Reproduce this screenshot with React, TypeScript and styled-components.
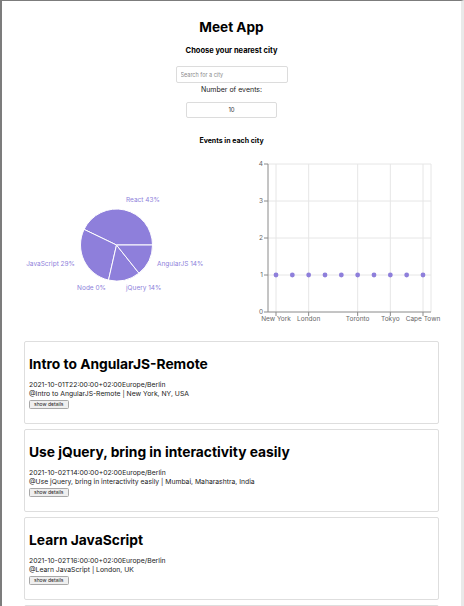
import * as React from "react";
import styled, {createGlobalStyle} from "styled-components";

const GlobalStyle = createGlobalStyle`
	html, body {
		margin: 0;
		padding: 0;
		background: #fff;
	}
	body {
		font-family: Inter, "Noto Sans", "Liberation Sans", sans-serif;
		color: #000;
	}
	* {
		box-sizing: border-box;
	}
`;

const PURPLE = "#8e7fdb";
const AXIS = "#8a8a8a";
const GRID = "#e6e6e6";

const Frame = styled.div`
	width: 464px;
	min-height: 606px;
	border-top: 1px solid #7c7c7c;
	border-left: 2px solid #7c7c7c;
	border-right: 3px solid #e9e9e9;
	display: flex;
	flex-direction: column;
	align-items: center;
`;

const Title = styled.h1`
	margin: 18px 0 0;
	font-size: 13.6px;
	font-weight: 700;
	line-height: 17px;
`;

const Subtitle = styled.h4`
	margin: 10px 0 0;
	font-size: 7.5px;
	font-weight: 700;
	line-height: 9px;
`;

const SearchInput = styled.input`
	margin-top: 11px;
	width: 112px;
	height: 17px;
	padding: 0 0 0 4px;
	border: 1px solid #dcdcdc;
	border-radius: 2px;
	font-family: inherit;
	font-size: 5.5px;
	outline: none;

	&::placeholder {
		color: #8a8a8a;
	}
`;

const Label = styled.label`
	margin-top: 3px;
	font-size: 7px;
	line-height: 8.5px;
	color: #222;
`;

const NumberInput = styled.input`
	margin-top: 7px;
	width: 91px;
	height: 16px;
	padding: 0;
	border: 1px solid #dcdcdc;
	border-radius: 2px;
	font-family: inherit;
	font-size: 6px;
	color: #333;
	text-align: center;
	outline: none;
`;

const SectionTitle = styled.h4`
	margin: 19px 0 0;
	font-size: 7px;
	font-weight: 700;
	line-height: 8.5px;
`;

const ChartsRow = styled.div`
	margin-top: 11px;
	width: 100%;
	display: grid;
	grid-template-columns: 1fr 1fr;
`;

const ChartBox = styled.div`
	display: flex;
	justify-content: center;
	height: 170px;
`;

const ChartText = styled.text<{$color?: string}>`
	font-family: Inter, "Noto Sans", sans-serif;
	font-size: 6.5px;
	fill: ${(p) => p.$color || "#666"};
`;

const EventList = styled.ul`
	list-style: none;
	margin: 15px 0 0;
	padding: 0;
	width: 415px;
	display: flex;
	flex-direction: column;
	gap: 5px;
`;

const EventCard = styled.li`
	border: 1px solid #dedede;
	border-radius: 2px;
	padding: 14px 4px 14px;
	height: 83px;
`;

const EventTitle = styled.h2`
	margin: 0 0 8px;
	font-size: 13.8px;
	font-weight: 700;
	line-height: 17px;
`;

const EventMeta = styled.p`
	margin: 0;
	font-size: 6.8px;
	line-height: 8.5px;
	color: #222;
`;

const DetailsButton = styled.button`
	display: block;
	margin-top: 2px;
	height: 9px;
	padding: 0 4px;
	font-family: inherit;
	font-size: 5px;
	line-height: 7px;
	color: #222;
	background: #efefef;
	border: 1px solid #a8a8a8;
	border-radius: 1.5px;
`;

const slices = [
	{name: "React", value: 3},
	{name: "JavaScript", value: 2},
	{name: "Node", value: 0},
	{name: "jQuery", value: 1},
	{name: "AngularJS", value: 1},
];

// label spots, picked to sit where the reference puts them
const labelSpots: Record<string, [number, number, "start" | "end"]> = {
	React: [124, 44, "start"],
	JavaScript: [73, 108, "end"],
	AngularJS: [155, 108, "start"],
	Node: [104, 132, "end"],
	jQuery: [124, 132, "start"],
};

const arc = (cx: number, cy: number, r: number, a0: number, a1: number) => {
	const pt = (a: number) => [
		cx + r * Math.cos((a * Math.PI) / 180),
		cy - r * Math.sin((a * Math.PI) / 180),
	];
	const [x0, y0] = pt(a0);
	const [x1, y1] = pt(a1);
	const large = a1 - a0 > 180 ? 1 : 0;
	return `M${cx},${cy} L${x0},${y0} A${r},${r} 0 ${large} 0 ${x1},${y1} Z`;
};

const GenrePie = () => {
	const total = slices.reduce((s, d) => s + d.value, 0);
	const cx = 114.5;
	const cy = 89;
	let angle = 0;
	const parts = slices.map((d) => {
		const a0 = angle;
		angle += (d.value / total) * 360;
		return {...d, a0, a1: angle};
	});

	return (
		<svg width={230} height={170}>
			{parts.filter((p) => p.value > 0).map((p) => (
				<path key={p.name} d={arc(cx, cy, 36, p.a0, p.a1)} fill={PURPLE} stroke="#fff" strokeWidth={1}/>
			))}
			{parts.map((p) => {
				const [x, y, anchor] = labelSpots[p.name];
				return (
					<ChartText key={p.name} x={x} y={y} $color={PURPLE} textAnchor={anchor} dominantBaseline="central">
						{p.name} {Math.round((p.value / total) * 100)}%
					</ChartText>
				);
			})}
		</svg>
	);
};

const cities = ["New York", "Paris", "London", "Berlin", "Madrid", "Toronto", "Mumbai", "Tokyo", "Sydney", "Cape Town"];
const shownTicks = [0, 2, 5, 7, 9];

const CityScatter = () => {
	const left = 36;
	const right = 199;
	const top = 8;
	const bottom = 156;
	const step = (191 - 44) / (cities.length - 1);
	const xAt = (i: number) => 44 + i * step;
	const yAt = (v: number) => bottom - (v / 4) * (bottom - top);

	return (
		<svg width={230} height={170}>
			{[1, 2, 3, 4].map((v) => (
				<line key={v} x1={left} x2={right} y1={yAt(v)} y2={yAt(v)} stroke={GRID}/>
			))}
			{shownTicks.map((i) => (
				<line key={i} x1={xAt(i)} x2={xAt(i)} y1={top} y2={bottom} stroke={GRID}/>
			))}
			<line x1={right} x2={right} y1={top} y2={bottom} stroke={GRID}/>

			<line x1={left} x2={left} y1={top} y2={bottom} stroke={AXIS}/>
			<line x1={left} x2={right} y1={bottom} y2={bottom} stroke={AXIS}/>
			{[0, 1, 2, 3, 4].map((v) => (
				<g key={v}>
					<line x1={left - 4} x2={left} y1={yAt(v)} y2={yAt(v)} stroke={AXIS}/>
					<ChartText x={left - 5} y={yAt(v)} textAnchor="end" dominantBaseline="central">{v}</ChartText>
				</g>
			))}
			{shownTicks.map((i) => (
				<g key={i}>
					<line x1={xAt(i)} x2={xAt(i)} y1={bottom} y2={bottom + 4} stroke={AXIS}/>
					<ChartText x={xAt(i)} y={bottom + 7} textAnchor="middle" dominantBaseline="central">{cities[i]}</ChartText>
				</g>
			))}
			{cities.map((c, i) => (
				<circle key={c} cx={xAt(i)} cy={yAt(1)} r={2.4} fill={PURPLE}/>
			))}
		</svg>
	);
};

const events = [
	{
		id: 1,
		summary: "Intro to AngularJS-Remote",
		start: "2021-10-01T22:00:00+02:00Europe/Berlin",
		location: "New York, NY, USA",
	},
	{
		id: 2,
		summary: "Use jQuery, bring in interactivity easily",
		start: "2021-10-02T14:00:00+02:00Europe/Berlin",
		location: "Mumbai, Maharashtra, India",
	},
	{
		id: 3,
		summary: "Learn JavaScript",
		start: "2021-10-02T16:00:00+02:00Europe/Berlin",
		location: "London, UK",
	},
	{
		id: 4,
		summary: "React is Fun",
		start: "2021-10-03T12:00:00+02:00Europe/Berlin",
		location: "Berlin, Germany",
	},
];

export const App = () => (
	<Frame>
		<GlobalStyle/>
		<Title>Meet App</Title>
		<Subtitle>Choose your nearest city</Subtitle>
		<SearchInput type="text" placeholder="Search for a city"/>
		<Label>Number of events:</Label>
		<NumberInput type="text" defaultValue="10"/>
		<SectionTitle>Events in each city</SectionTitle>

		<ChartsRow>
			<ChartBox>
				<GenrePie/>
			</ChartBox>
			<ChartBox>
				<CityScatter/>
			</ChartBox>
		</ChartsRow>

		<EventList>
			{events.map((ev) => (
				<EventCard key={ev.id}>
					<EventTitle>{ev.summary}</EventTitle>
					<EventMeta>{ev.start}</EventMeta>
					<EventMeta>@{ev.summary} | {ev.location}</EventMeta>
					<DetailsButton>show details</DetailsButton>
				</EventCard>
			))}
		</EventList>
	</Frame>
);

export default App;
